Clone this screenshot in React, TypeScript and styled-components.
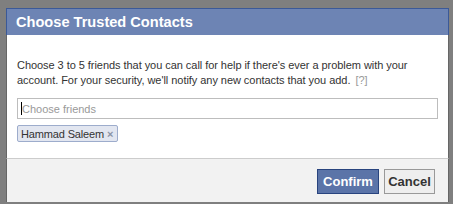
import React from "react";
import styled, { createGlobalStyle } from "styled-components";

const Global = createGlobalStyle`
  html, body { margin: 0; padding: 0; }
  body {
    background: #7f7f7f;
    width: 453px;
    height: 204px;
    overflow: hidden;
    font-family: "Liberation Sans", Arial, sans-serif;
  }
`;

const Frame = styled.div`
  padding: 8px 4px 0 6px;
  height: 204px;
  box-sizing: border-box;
`;

const Dialog = styled.div`
  display: flex;
  flex-direction: column;
  width: 443px;
`;

const Header = styled.div`
  height: 26px;
  display: flex;
  align-items: center;
  padding-left: 9px;
  background: #6d84b4;
  border: 1px solid #3b5998;
  border-bottom: none;
`;

const Title = styled.h2`
  margin: 0;
  font-family: "Liberation Sans", Arial, sans-serif;
  font-size: 14.6px;
  font-weight: bold;
  color: #ffffff;
`;

const Body = styled.div`
  background: #ffffff;
  padding: 23px 10px 16px 10px;
  border-left: 1px solid #666;
  border-right: 1px solid #666;
  display: flex;
  flex-direction: column;
`;

const Text = styled.p`
  margin: 0;
  font-size: 11px;
  line-height: 15px;
  color: #333333;
  font-family: "Liberation Sans", Arial, sans-serif;
  letter-spacing: -0.05px;
`;

const Help = styled.span`
  display: inline-block;
  margin-left: 5px;
  color: #999999;
`;

const Input = styled.div`
  margin-top: 10px;
  height: 19px;
  border: 1px solid #bdbdbd;
  display: flex;
  align-items: center;
  padding-left: 3px;
  font-family: "Liberation Sans", Arial, sans-serif;
  font-size: 11px;
  color: #999999;
`;

const Caret = styled.span`
  display: inline-block;
  width: 1px;
  height: 13px;
  background: #000;
`;

const Tokens = styled.div`
  margin-top: 6px;
  display: flex;
`;

const Token = styled.span`
  display: inline-flex;
  align-items: center;
  height: 15px;
  padding: 0 4px 0 3px;
  background: #e2e6f0;
  border: 1px solid #9daccc;
  border-radius: 2px;
  font-family: "Liberation Sans", Arial, sans-serif;
  font-size: 11px;
  letter-spacing: -0.15px;
  color: #333;
`;

const Remove = styled.span`
  margin-left: 3px;
  color: #8b93a6;
  font-size: 11px;
  font-weight: bold;
`;

const Footer = styled.div`
  background: #f2f2f2;
  border-top: 1px solid #cccccc;
  border-left: 1px solid #666;
  border-right: 1px solid #666;
  padding: 10px 13px 8px 0;
  display: flex;
  justify-content: flex-end;
  gap: 5px;
`;

const Button = styled.button<{ $primary?: boolean }>`
  height: 25px;
  box-sizing: border-box;
  padding: 0;
  font-family: "Liberation Sans", Arial, sans-serif;
  font-size: 13px;
  font-weight: bold;
  cursor: pointer;
  border: 1px solid ${(p) => (p.$primary ? "#29447e" : "#999999")};
  background: ${(p) => (p.$primary ? "#5b74a8" : "#eeeeee")};
  color: ${(p) => (p.$primary ? "#ffffff" : "#333333")};
  width: ${(p) => (p.$primary ? "62px" : "51px")};
`;

export default function App() {
  return (
    <>
      <Global />
      <Frame>
        <Dialog>
          <Header>
            <Title>Choose Trusted Contacts</Title>
          </Header>
          <Body>
            <Text>
              Choose 3 to 5 friends that you can call for help if there's ever a problem with your
              account. For your security, we'll notify any new contacts that you add.
              <Help>[?]</Help>
            </Text>
            <Input>
              <Caret />
              Choose friends
            </Input>
            <Tokens>
              <Token>
                Hammad Saleem<Remove>×</Remove>
              </Token>
            </Tokens>
          </Body>
          <Footer>
            <Button $primary>Confirm</Button>
            <Button>Cancel</Button>
          </Footer>
        </Dialog>
      </Frame>
    </>
  );
}
